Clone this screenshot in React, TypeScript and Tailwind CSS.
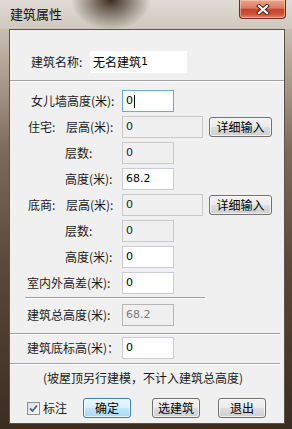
import React from 'react';

const cjk = { fontFamily: '"Noto Sans CJK SC", "Liberation Sans", sans-serif' };
const num = { fontFamily: '"DejaVu Sans", "Noto Sans CJK SC", sans-serif' };

function Field({ value, w = 'w-[52px]', disabled, focused, h = 'h-[22px]' }: any) {
    const base = 'flex items-center pl-[3px] text-[11px] border ' + w + ' ' + h;
    const tone = disabled
        ? ' bg-[#f0f0f0] border-[#c9c9c9] text-[#222]'
        : focused
            ? ' bg-white border-[#6fa7d9] text-black'
            : ' bg-white border-[#c8ccd4] text-black';
    return (
        <div className={base + tone} style={num}>
            <span>{value}</span>
            {focused && <span className="ml-[1px] w-px h-[13px] bg-black" />}
        </div>
    );
}

function WinButton({ children, w = 'w-[48px]', h = 'h-[20px]', primary }: any) {
    const cls = primary
        ? 'border-[#3c7fb1] bg-[linear-gradient(180deg,#eaf6fd_0%,#d9f0fc_48%,#bee6fd_52%,#a7d9f5_100%)]'
        : 'border-[#707070] bg-[linear-gradient(180deg,#f2f2f2_0%,#ebebeb_48%,#dddddd_52%,#cfcfcf_100%)]';
    return (
        <div className={'flex items-center justify-center rounded-[3px] border text-[12px] text-black shadow-[inset_0_0_0_1px_rgba(255,255,255,0.7)] ' + w + ' ' + h + ' ' + cls} style={cjk}>
            {children}
        </div>
    );
}

function Sep({ className = '' }: any) {
    return <div className={'h-px bg-[#a0a0a0] border-b border-white box-content ' + className} />;
}

function Row({ pl, label, children }: any) {
    return (
        <div className="flex items-center">
            <div className={'w-[112px] flex items-center text-[12px] text-[#1a1a1a] ' + pl} style={cjk}>
                {label}
            </div>
            {children}
        </div>
    );
}

export default function App() {
    return (
        <div className="w-[292px] h-[429px] overflow-hidden relative bg-[linear-gradient(180deg,#d8d2ca_0%,#b3a697_15%,#7d6b5a_35%,#5c4a3b_60%,#3b2d22_100%)]">
            {/* title bar */}
            <div className="relative h-[29px] flex items-center pl-[10px] bg-[radial-gradient(ellipse_40px_30px_at_38%_0%,#3c2c20_0%,rgba(60,44,32,0.5)_50%,transparent_100%),linear-gradient(180deg,#e0dbd4_0%,#cfc8be_100%)]">
                <span className="text-[13px] text-[#111] pb-[1px]" style={cjk}>建筑属性</span>
                <div className="absolute top-0 right-[6px] w-[47px] h-[19px] rounded-b-[4px] border border-t-0 border-[#6e2a1e] bg-[linear-gradient(180deg,#e9a58f_0%,#d97c63_45%,#c4432b_52%,#cc5337_80%,#e08c6e_100%)] flex items-center justify-center shadow-[inset_0_0_0_1px_rgba(255,220,200,0.5)]">
                    <svg width="14" height="11" viewBox="0 0 14 11">
                        <path d="M3 2 L11 9 M11 2 L3 9" stroke="#5a1c12" strokeWidth="4" strokeLinecap="square" />
                        <path d="M3 2 L11 9 M11 2 L3 9" stroke="#ffffff" strokeWidth="2.2" strokeLinecap="square" />
                    </svg>
                </div>
            </div>

            {/* client panel */}
            <div className="ml-[9px] mr-[7px] h-[395px] border border-[#5e5247] bg-[#f0f0f0] flex flex-col">
                <div className="mt-[21px] flex items-center">
                    <div className="w-[80px] pl-[21px] text-[12px] text-[#1a1a1a]" style={cjk}>建筑名称:</div>
                    <div className="w-[97px] h-[22px] bg-white flex items-center pl-[3px] text-[12px] text-black" style={cjk}>
                        无名建筑<span style={num} className="text-[11px]">1</span>
                    </div>
                </div>

                <Sep className="mt-[7px]" />

                <div className="mt-[8px] flex flex-col gap-[4px]">
                    <Row pl="pl-[21px]" label="女儿墙高度(米):">
                        <Field value="0" focused />
                    </Row>
                    <Row pl="pl-[18px]" label={<><span className="w-[38px]">住宅:</span><span>层高(米):</span></>}>
                        <Field value="0" disabled w="w-[81px]" />
                        <div className="ml-[6px]"><WinButton w="w-[63px]">详细输入</WinButton></div>
                    </Row>
                    <Row pl="pl-[55px]" label="层数:">
                        <Field value="0" disabled />
                    </Row>
                    <Row pl="pl-[55px]" label="高度(米):">
                        <Field value="68.2" />
                    </Row>
                    <Row pl="pl-[18px]" label={<><span className="w-[38px]">底商:</span><span>层高(米):</span></>}>
                        <Field value="0" disabled w="w-[81px]" />
                        <div className="ml-[6px]"><WinButton w="w-[63px]">详细输入</WinButton></div>
                    </Row>
                    <Row pl="pl-[55px]" label="层数:">
                        <Field value="0" disabled />
                    </Row>
                    <Row pl="pl-[55px]" label="高度(米):">
                        <Field value="0" />
                    </Row>
                    <Row pl="pl-[17px]" label="室内外高差(米):">
                        <Field value="0" />
                    </Row>
                </div>

                <Sep className="mt-[3px] ml-[15px] w-[180px]" />

                <div className="mt-[5px]">
                    <Row pl="pl-[17px]" label="建筑总高度(米):">
                        <div className="w-[52px] h-[22px] border border-[#b5b5b5] bg-[#f0f0f0] flex items-center pl-[3px] text-[11px] text-[#7a7a7a]" style={num}>68.2</div>
                    </Row>
                </div>

                <Sep className="mt-[7px] mr-[4px]" />

                <div className="mt-[2px]">
                    <Row pl="pl-[17px]" label="建筑底标高(米)：">
                        <Field value="0" />
                    </Row>
                </div>

                <Sep className="mt-[4px] mr-[4px]" />

                <div className="mt-[3px] h-[20px] flex items-center justify-center pr-[8px] text-[12px] text-[#1a1a1a]" style={cjk}>
                    (坡屋顶另行建模，不计入建筑总高度)
                </div>

                <div className="mt-[10px] flex items-center pl-[17px]">
                    <div className="w-[13px] h-[13px] border border-[#8e8f8f] bg-[linear-gradient(135deg,#dcdcdc,#ffffff)] flex items-center justify-center">
                        <svg width="9" height="9" viewBox="0 0 9 9">
                            <path d="M1 4.5 L3.5 7 L8 1.5" stroke="#4a5f97" strokeWidth="1.8" fill="none" />
                        </svg>
                    </div>
                    <span className="ml-[3px] text-[12px] text-[#1a1a1a]" style={cjk}>标注</span>
                    <div className="ml-[16px]"><WinButton primary>确定</WinButton></div>
                    <div className="ml-[21px]"><WinButton>选建筑</WinButton></div>
                    <div className="ml-[18px]"><WinButton>退出</WinButton></div>
                </div>
            </div>
        </div>
    );
}
